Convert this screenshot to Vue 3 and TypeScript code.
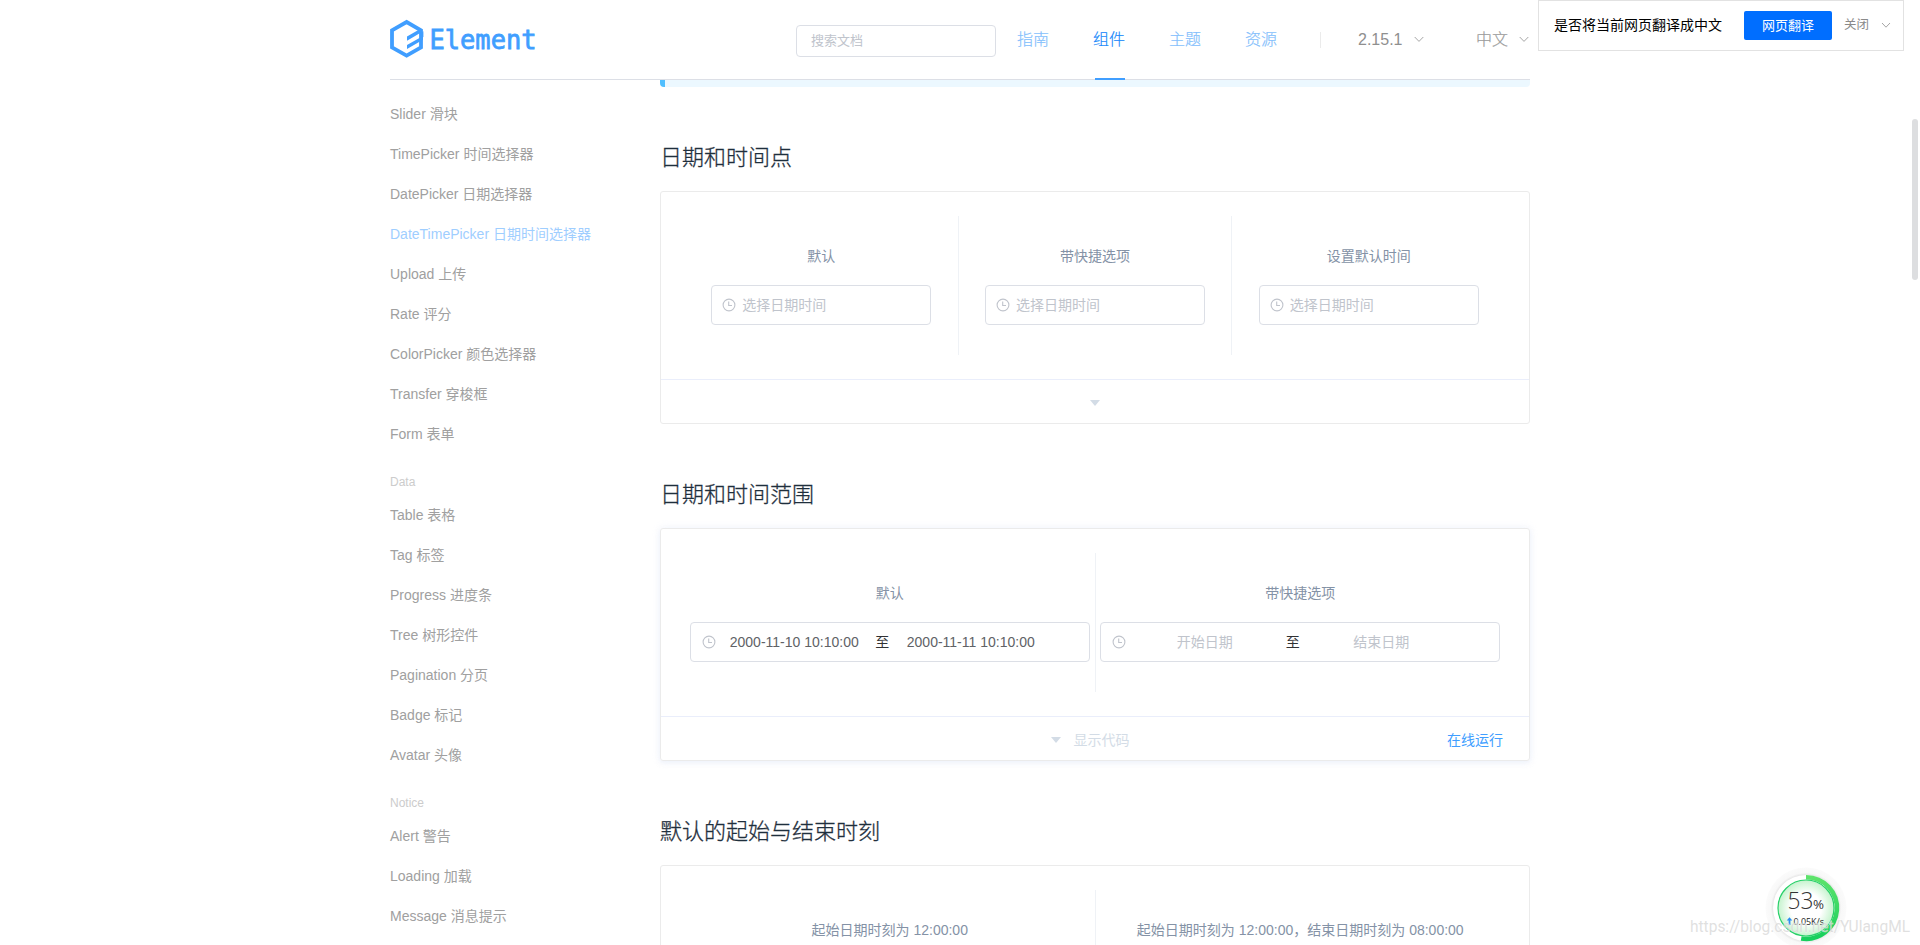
<script setup lang="ts">
interface NavItem {
  label: string
  active?: boolean
}
interface SideGroup {
  title: string
  items: string[]
}
interface RangeBlock {
  label: string
  start: string
  end: string
  filled: boolean
}

const nav: NavItem[] = [
  { label: '指南' },
  { label: '组件', active: true },
  { label: '主题' },
  { label: '资源' },
]

const activeItem = 'DateTimePicker 日期时间选择器'
const groups: SideGroup[] = [
  {
    title: '',
    items: [
      'Slider 滑块',
      'TimePicker 时间选择器',
      'DatePicker 日期选择器',
      activeItem,
      'Upload 上传',
      'Rate 评分',
      'ColorPicker 颜色选择器',
      'Transfer 穿梭框',
      'Form 表单',
    ],
  },
  {
    title: 'Data',
    items: ['Table 表格', 'Tag 标签', 'Progress 进度条', 'Tree 树形控件', 'Pagination 分页', 'Badge 标记', 'Avatar 头像'],
  },
  { title: 'Notice', items: ['Alert 警告', 'Loading 加载', 'Message 消息提示'] },
]

const pickers: string[] = ['默认', '带快捷选项', '设置默认时间']
const ranges: RangeBlock[] = [
  { label: '默认', start: '2000-11-10 10:10:00', end: '2000-11-11 10:10:00', filled: true },
  { label: '带快捷选项', start: '开始日期', end: '结束日期', filled: false },
]
const defaults: string[] = ['起始日期时刻为 12:00:00', '起始日期时刻为 12:00:00，结束日期时刻为 08:00:00']
</script>

<template>
  <div class="page">
    <header class="header">
      <div class="bar">
        <svg class="logo" width="156" height="50" viewBox="0 0 156 50">
          <path d="M16.6 3 L31 11.3 V28.3 L16.6 36.6 L2 28.3 V11.3 Z" fill="none" stroke="#409eff" stroke-width="3.8" />
          <path
            d="M17 17.6 L31 9.6 V13.6 L17 21.7 Z M17 25.9 L33 16.9 V20.8 L17 30 Z"
            fill="#409eff"
          />
          <path d="M30.5 13.8 L33.4 12.2 V18 L30.5 19.4 Z" fill="#409eff" />
          <text class="wordmark" x="39.5" y="29.7" textLength="107" lengthAdjust="spacingAndGlyphs">Element</text>
        </svg>
        <div class="search">搜索文档</div>
        <nav class="nav">
          <a v-for="n in nav" :key="n.label" class="nav-item" :class="{ active: n.active }">{{ n.label }}</a>
        </nav>
        <i class="split"></i>
        <span class="drop version">2.15.1</span>
        <svg class="chev" width="10" height="7" viewBox="0 0 10 7"><path d="M0.7 1 L5 5.4 L9.3 1" /></svg>
        <span class="drop lang">中文</span>
        <svg class="chev lang-chev" width="10" height="7" viewBox="0 0 10 7"><path d="M0.7 1 L5 5.4 L9.3 1" /></svg>
      </div>
    </header>

    <div class="body">
      <aside class="side">
        <section v-for="g in groups" :key="g.title" class="group">
          <div v-if="g.title" class="group-title">{{ g.title }}</div>
          <a v-for="it in g.items" :key="it" class="side-item" :class="{ active: it === activeItem }">{{ it }}</a>
        </section>
      </aside>

      <main class="main">
        <div class="tip"></div>

        <h3>日期和时间点</h3>
        <div class="card">
          <div class="source">
            <div v-for="p in pickers" :key="p" class="block">
              <span class="label">{{ p }}</span>
              <div class="input single">
                <svg class="clock" width="14" height="14" viewBox="0 0 14 14">
                  <circle cx="7" cy="7" r="5.9" />
                  <path d="M6.7 3.6 V7.5 H10" />
                </svg>
                <span>选择日期时间</span>
              </div>
            </div>
          </div>
          <div class="foot"><i class="caret"></i></div>
        </div>

        <h3>日期和时间范围</h3>
        <div class="card hover">
          <div class="source">
            <div v-for="r in ranges" :key="r.label" class="block">
              <span class="label">{{ r.label }}</span>
              <div class="input range" :class="{ filled: r.filled }">
                <svg class="clock" width="14" height="14" viewBox="0 0 14 14">
                  <circle cx="7" cy="7" r="5.9" />
                  <path d="M6.7 3.6 V7.5 H10" />
                </svg>
                <span class="end">{{ r.start }}</span>
                <span class="to">至</span>
                <span class="end">{{ r.end }}</span>
              </div>
            </div>
          </div>
          <div class="foot">
            <i class="caret"></i><span class="show">显示代码</span>
            <a class="run">在线运行</a>
          </div>
        </div>

        <h3>默认的起始与结束时刻</h3>
        <div class="card">
          <div class="source">
            <div v-for="d in defaults" :key="d" class="block">
              <span class="label">{{ d }}</span>
              <div class="input range"></div>
            </div>
          </div>
          <div class="foot"></div>
        </div>
      </main>
    </div>

    <div class="translate">
      <span class="ask">是否将当前网页翻译成中文</span>
      <button class="go">网页翻译</button>
      <span class="close">关闭</span>
      <svg class="chev tchev" width="10" height="7" viewBox="0 0 10 7"><path d="M1 1 L5 5.2 L9 1" /></svg>
    </div>

    <i class="scroll"></i>

    <svg class="meter" width="84" height="84" viewBox="0 0 84 84">
      <defs>
        <radialGradient id="disc">
          <stop offset="0.55" stop-color="#fff" />
          <stop offset="1" stop-color="#c5f3cd" />
        </radialGradient>
        <linearGradient id="ring" x1="0" y1="0" x2="0" y2="1">
          <stop offset="0" stop-color="#5de36b" />
          <stop offset="1" stop-color="#17cf5c" />
        </linearGradient>
        <radialGradient id="halo">
          <stop offset="0.8" stop-color="#e2e2e2" />
          <stop offset="0.87" stop-color="#f8f8f8" />
          <stop offset="1" stop-color="#fbfbfb" />
        </radialGradient>
      </defs>
      <circle cx="42" cy="42" r="40.5" fill="url(#halo)" />
      <circle cx="42" cy="42" r="33" fill="#fff" />
      <path d="M42 11.2 A30.8 30.8 0 1 1 37.2 72.4" fill="none" stroke="url(#ring)" stroke-width="4.6" />
      <circle cx="42" cy="42" r="28" fill="url(#disc)" stroke="#26d068" stroke-width="1.2" />
      <text class="pct" x="23.5" y="43" textLength="26" lengthAdjust="spacingAndGlyphs">53</text>
      <text class="sign" x="49" y="43.3" textLength="11" lengthAdjust="spacingAndGlyphs">%</text>
      <path d="M25.5 51.3 L28.3 54.6 H26.4 V59 H24.6 V54.6 H22.7 Z" fill="#2b8df0" />
      <text class="speed" x="29.5" y="59.3" textLength="30.5" lengthAdjust="spacingAndGlyphs">0.05K/s</text>
    </svg>

    <svg class="mark" width="240" height="32" viewBox="0 0 240 32">
      <text x="10" y="20" textLength="220" lengthAdjust="spacingAndGlyphs">https://blog.csdn.net/YUlangML</text>
    </svg>
  </div>
</template>

<style>
body {
  overflow: hidden;
}
</style>

<style scoped>
.page {
  position: relative;
  width: 1920px;
  height: 945px;
  overflow: hidden;
  background: #fff;
  font-family: 'Liberation Sans', 'Noto Sans CJK SC', sans-serif;
  font-size: 14px;
}
.header {
  height: 80px;
}
.bar {
  box-sizing: border-box;
  width: 1140px;
  height: 80px;
  margin: 0 auto;
  border-bottom: 1px solid #dcdfe6;
  display: flex;
  align-items: flex-start;
}
.logo {
  margin-top: 19px;
  flex: none;
}
.wordmark {
  font-family: 'DejaVu Sans Mono', monospace;
  font-size: 27px;
  fill: #409eff;
  stroke: #409eff;
  stroke-width: 0.8px;
}
.search {
  box-sizing: border-box;
  width: 200px;
  height: 32px;
  margin: 25px 0 0 250px;
  padding-left: 14px;
  border: 1px solid #dcdfe6;
  border-radius: 4px;
  font-size: 13px;
  line-height: 29px;
  color: #c0c4cc;
}
.nav {
  display: flex;
  gap: 44px;
  margin-left: 21px;
}
.nav-item {
  box-sizing: border-box;
  width: 32px;
  height: 80px;
  font-size: 16px;
  font-weight: 300;
  -webkit-text-stroke: 0.2px currentColor;
  line-height: 79px;
  color: #84c0fc;
  display: flex;
  flex-direction: column;
  align-items: center;
  white-space: nowrap;
}
.nav-item.active {
  color: #1989fa;
}
.nav-item.active::after {
  content: '';
  width: 30px;
  height: 2px;
  margin: -1px 0 0 2px;
  background: #409eff;
}
.split {
  width: 1px;
  height: 16px;
  margin: 32px 0 0 43px;
  background: #ebebeb;
}
.drop {
  font-size: 16px;
  line-height: 79px;
  color: #8f8f8f;
}
.version {
  width: 45px;
  margin-left: 37px;
}
.lang {
  width: 32px;
  margin-left: 52px;
  color: #999;
  font-weight: 300;
  -webkit-text-stroke: 0.2px currentColor;
}
.chev {
  margin: 36px 0 0 11px;
  fill: none;
  stroke: #a5a5a5;
  stroke-width: 1;
  flex: none;
}
.lang-chev {
  margin-left: 11px;
}
.body {
  width: 1140px;
  margin: 0 auto;
  display: flex;
}
.side {
  width: 270px;
  padding-top: 14px;
}
.group + .group {
  margin-top: 15px;
}
.group-title {
  height: 26px;
  line-height: 26px;
  font-size: 12px;
  color: #ccc;
}
.side-item {
  display: block;
  height: 40px;
  line-height: 41px;
  color: #a0a0a0;
}
.side-item.active {
  color: #9fceff;
}
.main {
  width: 870px;
}
.tip {
  box-sizing: border-box;
  height: 7px;
  border-left: 5px solid #50bfff;
  border-radius: 0 0 4px 4px;
  background: #ecf8ff;
}
h3 {
  margin: 55px 0 19px;
  height: 30px;
  line-height: 32px;
  font-size: 22px;
  font-weight: 300;
  -webkit-text-stroke: 0.3px currentColor;
  color: #1f2f3d;
}
.card {
  box-sizing: border-box;
  height: 233px;
  border: 1px solid #ebebeb;
  border-radius: 3px;
}
.card.hover {
  box-shadow: 0 0 8px 0 rgba(232, 237, 250, 0.6), 0 2px 4px 0 rgba(232, 237, 250, 0.5);
}
.source {
  display: flex;
  height: 139px;
  padding: 24px;
}
.block {
  box-sizing: border-box;
  flex: 1 1 0;
  min-width: 0;
  padding: 30px 0;
  border-right: 1px solid #eff2f6;
  display: flex;
  flex-direction: column;
  align-items: center;
}
.block:last-child {
  border-right: 0;
}
.label {
  height: 19px;
  margin-bottom: 20px;
  line-height: 21px;
  color: #8492a6;
  white-space: nowrap;
}
.input {
  box-sizing: border-box;
  height: 40px;
  border: 1px solid #dcdfe6;
  border-radius: 4px;
  line-height: 39px;
  color: #c0c4cc;
  display: flex;
  flex: none;
}
.single {
  width: 220px;
  padding-left: 10px;
  gap: 6px;
}
.range {
  width: 400px;
  padding-left: 11px;
}
.range .end {
  width: 156px;
  text-align: center;
}
.range .clock + .end {
  margin-left: 0.5px;
}
.range .to {
  width: 20px;
  text-align: center;
  color: #303133;
}
.range .to + .end {
  margin-left: 0.5px;
}
.range.filled .end {
  color: #606266;
}
.clock {
  margin-top: 12px;
  fill: none;
  stroke: #c0c4cc;
  stroke-width: 1.1;
  flex: none;
}
.foot {
  position: relative;
  box-sizing: border-box;
  height: 44px;
  border-top: 1px solid #eaeefb;
  display: flex;
  justify-content: center;
  align-items: center;
  color: #d3dce6;
}
.caret {
  width: 0;
  height: 0;
  margin-top: 2px;
  border: 5px solid transparent;
  border-top: 6px solid #d3dce6;
  border-bottom: 0;
}
.show {
  margin: 0 10px 0 13px;
}
.run {
  position: absolute;
  right: 26px;
  top: 0;
  line-height: 46px;
  color: #409eff;
}
.translate {
  position: absolute;
  top: 0;
  left: 1538px;
  box-sizing: border-box;
  width: 366px;
  height: 51px;
  border: 1px solid #e2e2e2;
  background: #fff;
  display: flex;
  align-items: flex-start;
}
.ask {
  width: 175px;
  margin-left: 15px;
  line-height: 48px;
  color: #000;
  white-space: nowrap;
}
.go {
  width: 88px;
  height: 29px;
  margin: 10px 0 0 15px;
  padding: 0;
  border: 0;
  border-radius: 2px;
  background: #006eff;
  color: #fff;
  font: inherit;
  font-size: 13px;
  line-height: 28px;
}
.close {
  width: 25px;
  margin-left: 12px;
  font-size: 12.5px;
  line-height: 49px;
  color: #8a8a8a;
}
.tchev {
  margin: 21px 0 0 12px;
}
.scroll {
  position: absolute;
  left: 1912px;
  top: 119px;
  width: 6px;
  height: 161px;
  border-radius: 3px;
  background: #dddee0;
}
.meter {
  position: absolute;
  left: 1764px;
  top: 866px;
}
.pct {
  font-family: 'Open Sans', Roboto, sans-serif;
  font-weight: 300;
  font-size: 24px;
  fill: #333;
}
.sign {
  font-family: 'Open Sans', Roboto, sans-serif;
  font-size: 13px;
  fill: #333;
}
.speed {
  font-family: 'Open Sans', 'Noto Sans', sans-serif;
  font-size: 9.5px;
  fill: #222;
}
.mark {
  position: absolute;
  left: 1680px;
  top: 912px;
}
.mark text {
  font-family: Roboto, sans-serif;
  font-size: 16px;
  fill: rgba(214, 214, 214, 0.75);
  stroke: rgba(255, 255, 255, 0.35);
  stroke-width: 0.8px;
  paint-order: stroke;
}
</style>
